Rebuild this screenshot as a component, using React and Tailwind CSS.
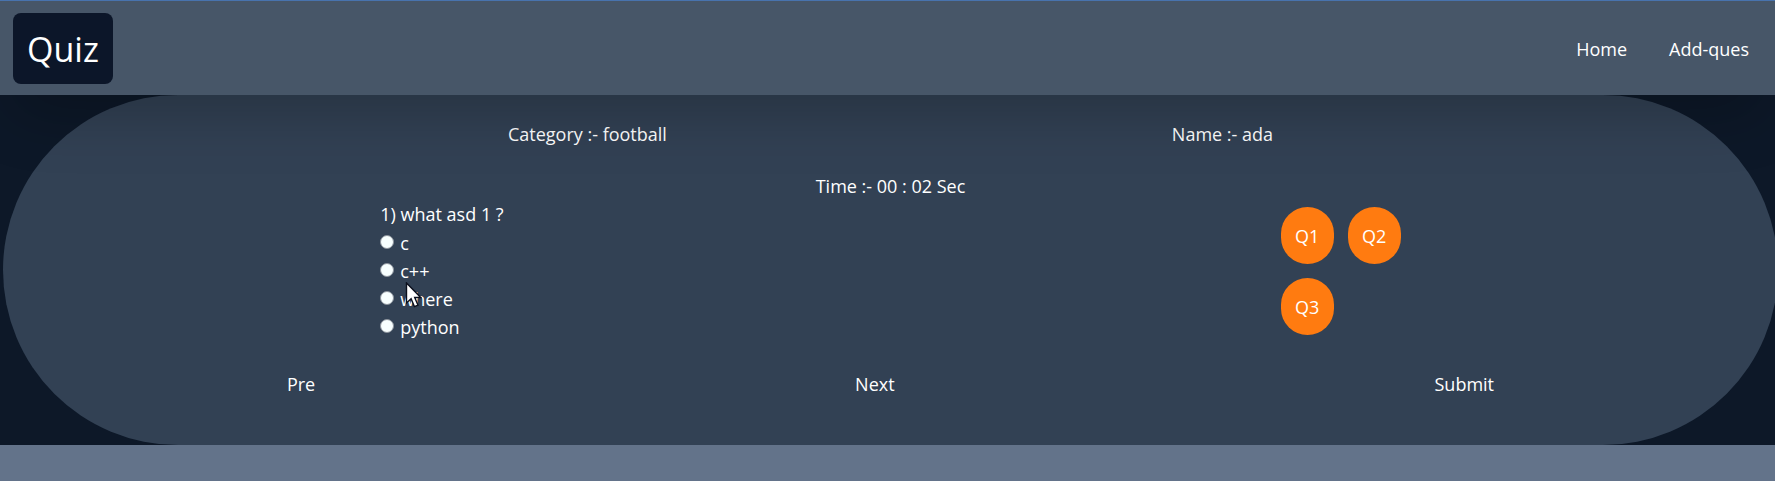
import { useState } from "react";

const options = ["c", "c++", "where", "python"];
const questions = ["Q1", "Q2", "Q3"];

function Header() {
  return (
    <header className="relative z-10 flex items-center justify-between border-t border-[#4873ae] bg-[#475668] pt-3 pr-[26px] pb-[11px] pl-[13px] shadow-[0_30px_60px_-14px_rgba(0,0,0,0.25)]">
      <a href="#" className="rounded-lg bg-[#0c1629] px-[14px] pt-[15px] pb-[13px] text-[34px] leading-[43px]">
        Quiz
      </a>
      <nav className="flex gap-[42px]">
        <a href="#home">Home</a>
        <a href="#add">Add-ques</a>
      </nav>
    </header>
  );
}

function Pointer() {
  return (
    <svg className="pointer-events-none absolute top-[25px] left-[25px] z-10" width="17" height="27" viewBox="0 0 17 27" aria-hidden="true">
      <path d="M1.5 1v20l4.6-4.2 3.3 7.8 3.6-1.5-3.3-7.6h6z" fill="#fff" stroke="#0b0f1c" strokeWidth="1.4" />
    </svg>
  );
}

function Option({ label, children }) {
  return (
    <label className="relative flex items-center gap-[6px]">
      <input
        type="radio"
        name="answer"
        value={label}
        className="mb-[2px] size-[14px] appearance-none rounded-full border border-[#8b929b] bg-[#f8ffff] checked:border-4 checked:border-blue-600"
      />
      <span>{label}</span>
      {children}
    </label>
  );
}

export default function App() {
  const [, setCurrent] = useState(0);
  return (
    <div className="min-h-screen bg-[#63738a] font-['Open_Sans','Noto_Sans',sans-serif] text-[18px] leading-7 text-white">
      <Header />
      <main className="overflow-hidden bg-[#0d1828]">
        <section className="-mr-[3px] ml-[3px] rounded-[175px] bg-[#324154] pt-[25px] pb-[47px]">
          <div className="flex justify-evenly">
            <p>Category :- football</p>
            <p>Name :- ada</p>
          </div>
          <p className="mt-6 text-center">Time :- 00 : 02 Sec</p>
          <div className="flex justify-around">
            <fieldset className="w-[146px]">
              <legend className="mb-px whitespace-nowrap">1) what asd 1 ?</legend>
              {options.map((o) => (
                <Option key={o} label={o}>
                  {o === "c++" && <Pointer />}
                </Option>
              ))}
            </fieldset>
            <div className="grid grid-cols-2 gap-x-[14px] gap-y-[14px] py-[7px]">
              {questions.map((q, i) => (
                <button
                  key={q}
                  type="button"
                  onClick={() => setCurrent(i)}
                  className="h-[57px] w-[53px] rounded-full bg-[#ff7b10]"
                >
                  {q}
                </button>
              ))}
            </div>
          </div>
          <div className="mt-7 flex justify-around px-[14px]">
            <button type="button">Pre</button>
            <button type="button">Next</button>
            <button type="button">Submit</button>
          </div>
        </section>
      </main>
    </div>
  );
}
